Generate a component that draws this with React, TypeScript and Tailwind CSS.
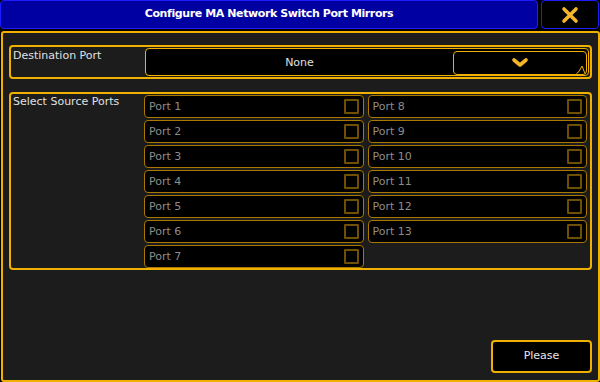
import React from "react";

const font = { fontFamily: '"DejaVu Sans", "Liberation Sans", sans-serif' };

function PortCell({ label }: { label: string }) {
  return (
    <div className="h-[23px] flex items-center justify-between rounded-[4px] border border-[#a87800] bg-black pl-[4px] pr-[4px]">
      <span className="text-[11px] text-[#8c8c8c] leading-none">{label}</span>
      <span className="w-[15px] h-[15px] border-2 border-[#6e5000] rounded-[1px]" />
    </div>
  );
}

export default function App() {
  const left = ["Port 1", "Port 2", "Port 3", "Port 4", "Port 5", "Port 6", "Port 7"];
  const right = ["Port 8", "Port 9", "Port 10", "Port 11", "Port 12", "Port 13"];
  return (
    <div className="w-[600px] h-[382px] bg-black flex flex-col" style={font}>
      <div className="h-[29px] flex gap-[3px]">
        <div className="flex-1 bg-[#0000a2] border border-[#1c1cff] rounded-[4px] flex items-center justify-center">
          <span className="text-white text-[11px] font-bold tracking-[-0.4px]">Configure MA Network Switch Port Mirrors</span>
        </div>
        <div className="w-[58px] mr-[1px] bg-black border border-[#1c1cff] rounded-[4px] flex items-center justify-center">
          <svg width="18" height="18" viewBox="0 0 18 18">
            <path d="M3 3 L15 15 M15 3 L3 15" stroke="#f5b52a" strokeWidth="3.6" strokeLinecap="round" />
          </svg>
        </div>
      </div>
      <div className="mt-[2px] ml-[1px] flex-1 border-2 border-[#f0b000] rounded-[3px] bg-[#1c1c1c] px-[6px] pt-[12px] pb-[7px] flex flex-col">
        <div className="h-[34px] border-2 border-[#f0b000] rounded-[4px] flex">
          <div className="w-[134px] pl-[2px] pt-[1px] text-[11px] text-[#e0e0e0]">Destination Port</div>
          <div className="flex-1 mr-[1px] my-[1px] border border-[#f0b000] rounded-[4px] bg-black flex items-center">
            <div className="flex-1 text-center text-[11px] text-[#e0e0e0] pt-[2px]">None</div>
            <div className="relative w-[134px] h-[24px] mr-[1px] mt-[1px] border border-[#f0b000] rounded-[4px] flex items-center justify-center">
              <svg width="18" height="11" viewBox="0 0 18 11">
                <path d="M3 3 L9 8 L15 3" stroke="#f5b52a" strokeWidth="3.6" fill="none" strokeLinecap="round" strokeLinejoin="round" />
              </svg>
              <svg className="absolute right-[0px] bottom-[0px]" width="10" height="9" viewBox="0 0 10 9">
                <path d="M0.5 8.5 L3 6.5 L6 1 L9 8.5" stroke="#f0b000" strokeWidth="1" fill="none" />
              </svg>
            </div>
          </div>
        </div>
        <div className="mt-[13px] h-[178px] border-2 border-[#f0b000] rounded-[4px] flex pt-[1px]">
          <div className="w-[133px] pl-[2px] text-[11px] text-[#e0e0e0] leading-[14px]">Select Source Ports</div>
          <div className="flex-1 grid grid-cols-2 gap-x-[4px] gap-y-[2px] content-start pr-[3px]">
            {left.map((l, i) => (
              <React.Fragment key={l}>
                <PortCell label={l} />
                {right[i] ? <PortCell label={right[i]} /> : <div />}
              </React.Fragment>
            ))}
          </div>
        </div>
        <div className="flex-1" />
        <div className="flex justify-end">
          <div className="w-[101px] h-[33px] border-2 border-[#f0b000] rounded-[4px] bg-black flex items-center justify-center text-[11px] text-[#e8e8e8]">
            Please
          </div>
        </div>
      </div>
    </div>
  );
}
